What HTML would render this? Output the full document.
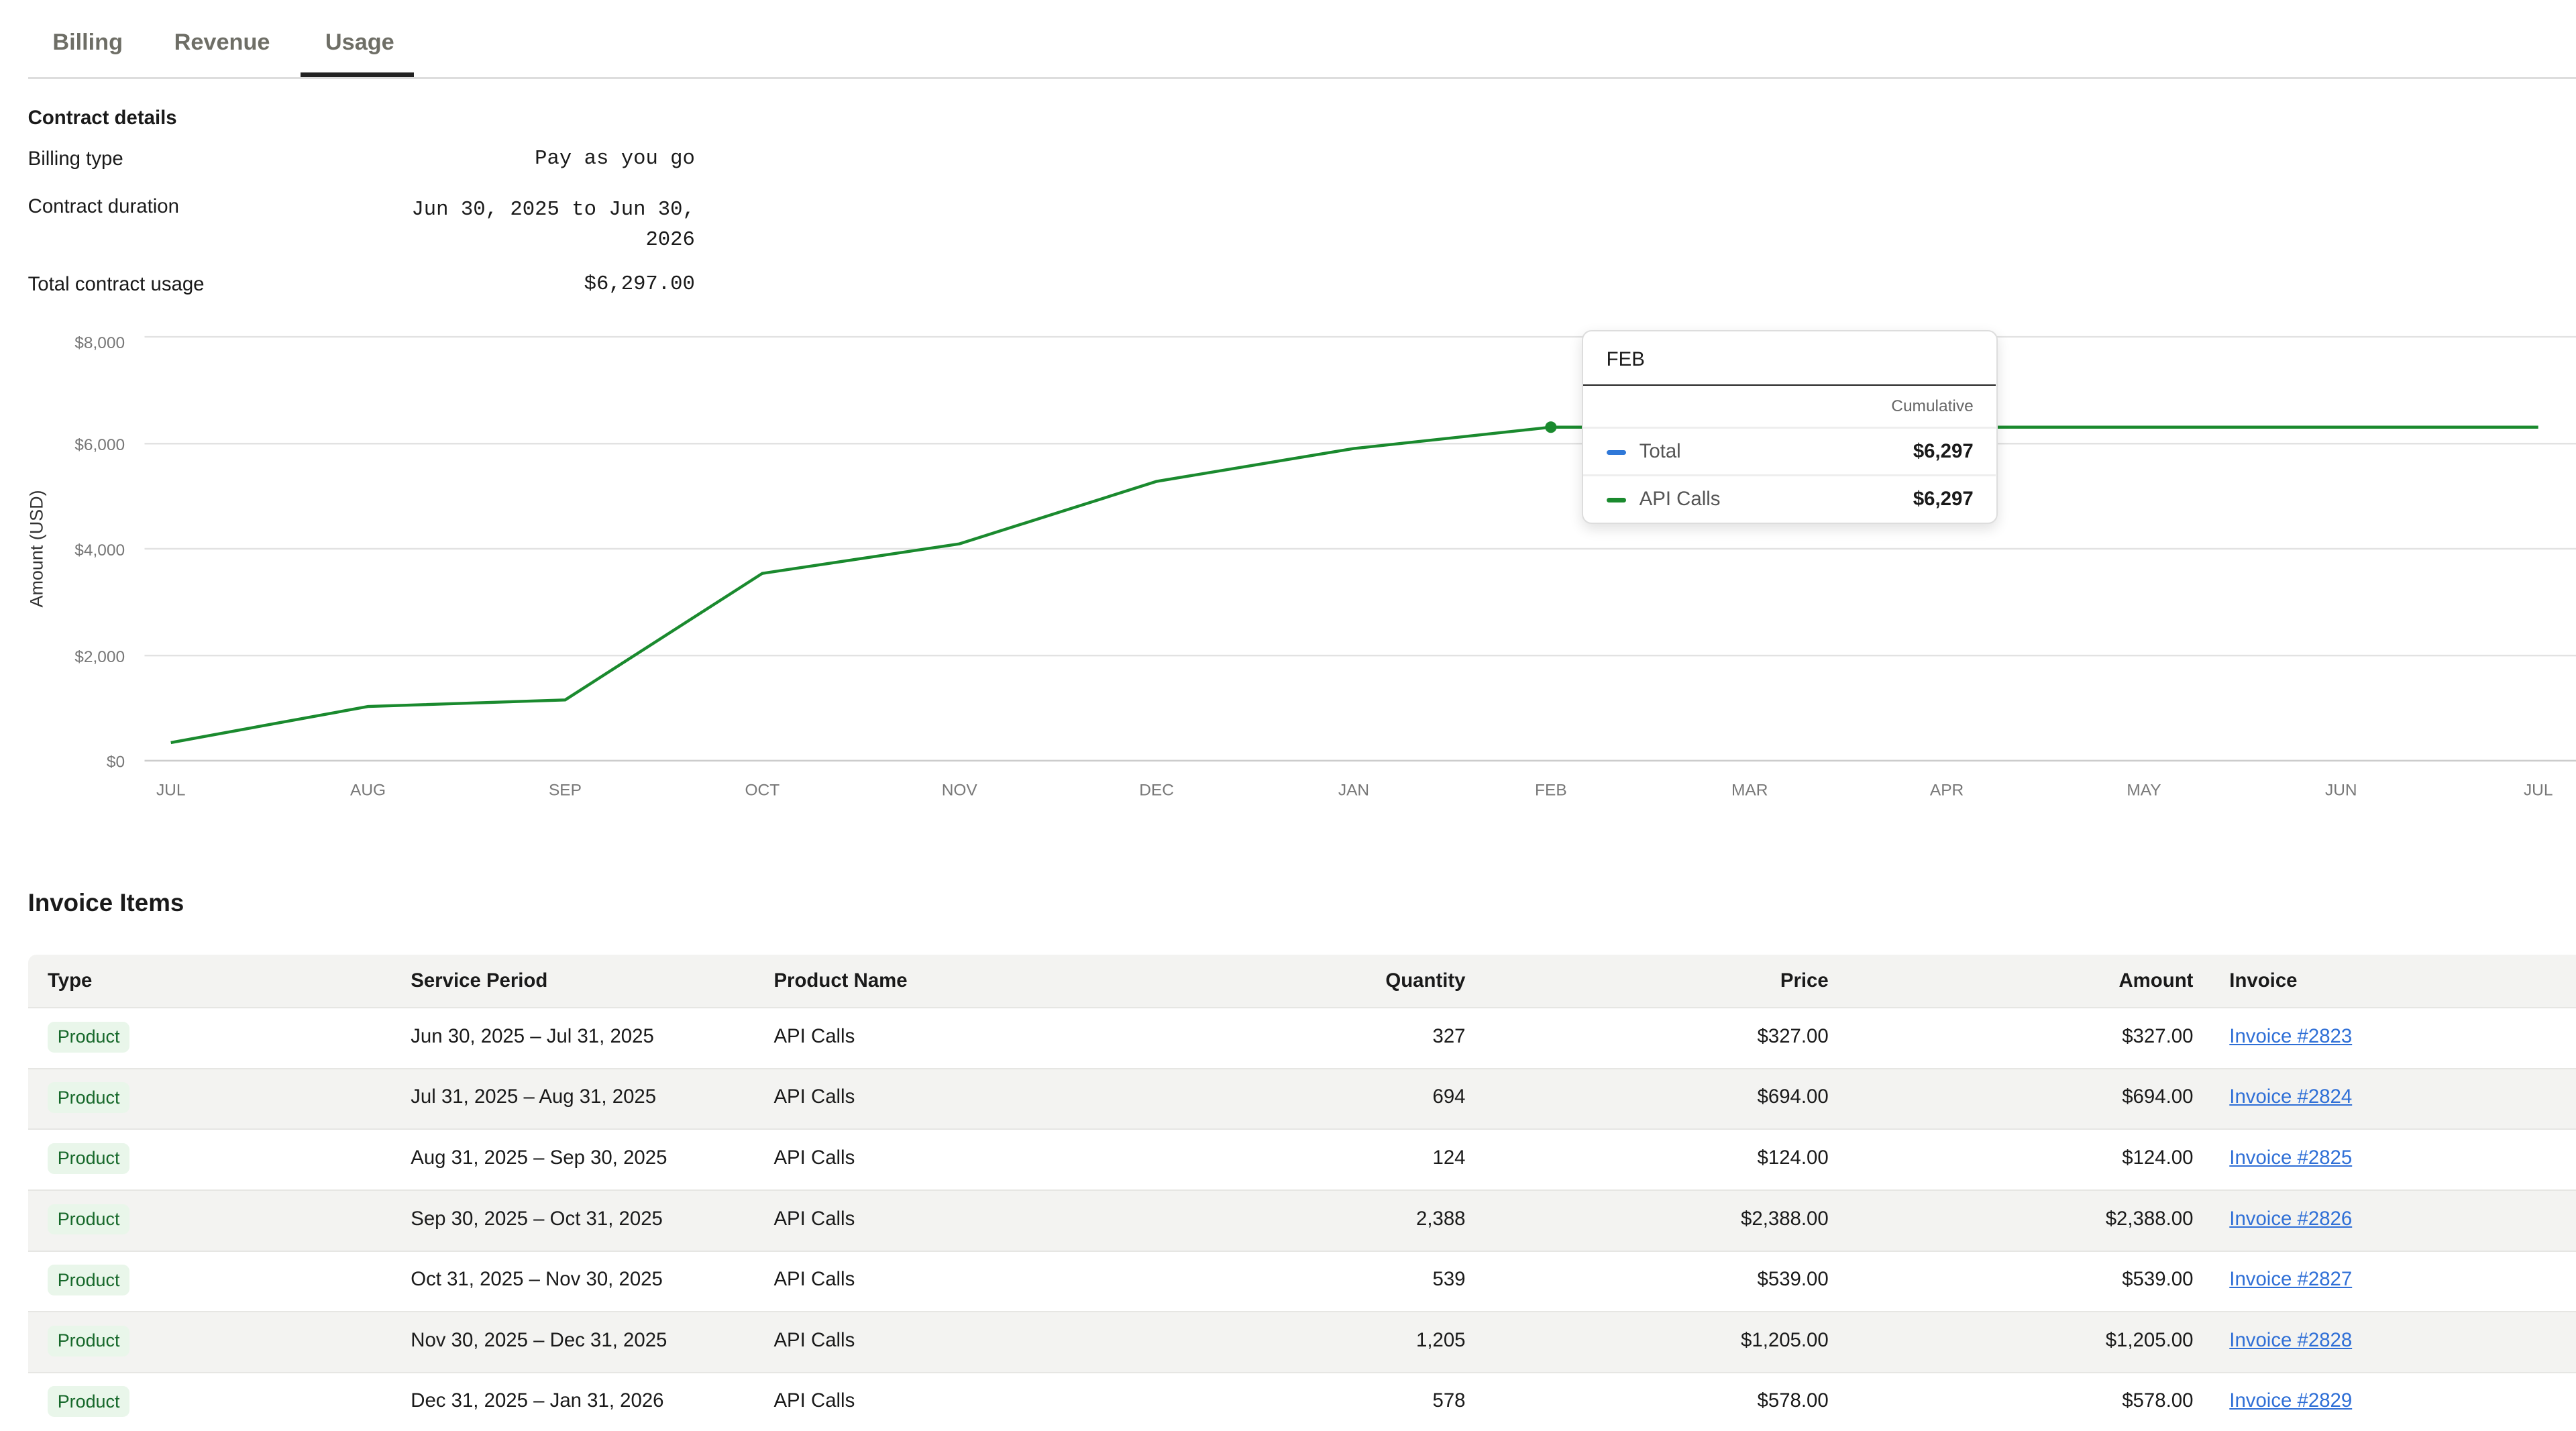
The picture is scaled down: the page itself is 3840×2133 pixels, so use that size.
<!DOCTYPE html>
<html><head><style>
*{margin:0;padding:0;box-sizing:border-box}
html,body{width:3840px;height:2133px;overflow:hidden;background:#fff}
#r{zoom:2.449;width:1568px;height:871px;position:relative;font-family:"Liberation Sans",sans-serif;color:#1a1a1a}
.a{position:absolute;white-space:nowrap}
.tab{font-size:14px;color:#6e6e66;font-weight:bold;top:18px}
.lbl{font-size:12px;left:17px}
.val{font-family:"Liberation Mono",monospace;font-size:12.5px;text-align:right}
.th{font-size:12px;font-weight:bold;top:590px}
.row{position:absolute;left:17px;width:1551px;height:37px;border-top:1px solid #e6e6e3}
.g{background:#f3f3f1}
.row .c{position:absolute;top:10px;font-size:12px;white-space:nowrap}
.pill{position:absolute;left:12px;top:8px;background:#e9f6ea;color:#16682a;font-size:11px;padding:3px 6px;border-radius:4px}
.lnk{color:#2f6fd6;text-decoration:underline}
.c1{left:233px}.c2{left:454px}.c3{right:676px}.c4{right:455px}.c5{right:233px}.c6{left:1340px}
</style></head><body><div id="r">
<div class="a tab" style="left:32px">Billing</div>
<div class="a tab" style="left:106px">Revenue</div>
<div class="a tab" style="left:198px">Usage</div>
<div class="a" style="left:17px;top:47px;width:1551px;height:1px;background:#ddd"></div>
<div class="a" style="left:183px;top:44px;width:69px;height:3px;background:#222"></div>
<div class="a" style="left:17px;top:65px;font-size:12px;font-weight:bold">Contract details</div>
<div class="a lbl" style="top:90px">Billing type</div>
<div class="a val" style="top:90px;left:0;width:423px">Pay as you go</div>
<div class="a lbl" style="top:119px">Contract duration</div>
<div class="a val" style="top:119px;left:0;width:423px;line-height:18px">Jun 30, 2025 to Jun 30,<br>2026</div>
<div class="a lbl" style="top:166px">Total contract usage</div>
<div class="a val" style="top:166px;left:0;width:423px">$6,297.00</div>
<svg class="a" style="left:0;top:0" width="1568" height="520">
<g stroke="#e2e2e2" stroke-width="1">
<line x1="88" x2="1568" y1="205" y2="205"/><line x1="88" x2="1568" y1="270" y2="270"/><line x1="88" x2="1568" y1="334" y2="334"/><line x1="88" x2="1568" y1="399" y2="399"/><line x1="88" x2="1568" y1="463" y2="463" stroke="#ccc"/></g>
<g font-family="Liberation Sans" font-size="10" fill="#777" text-anchor="end">
<text x="76" y="212">$8,000</text><text x="76" y="274">$6,000</text><text x="76" y="338">$4,000</text><text x="76" y="403">$2,000</text><text x="76" y="467">$0</text></g>
<g font-family="Liberation Sans" font-size="10" fill="#777" text-anchor="middle">
<text x="104" y="484">JUL</text><text x="224" y="484">AUG</text><text x="344" y="484">SEP</text><text x="464" y="484">OCT</text><text x="584" y="484">NOV</text><text x="704" y="484">DEC</text><text x="824" y="484">JAN</text><text x="944" y="484">FEB</text><text x="1065" y="484">MAR</text><text x="1185" y="484">APR</text><text x="1305" y="484">MAY</text><text x="1425" y="484">JUN</text><text x="1545" y="484">JUL</text></g>
<text transform="translate(26,334) rotate(-90)" font-family="Liberation Sans" font-size="11" fill="#333" text-anchor="middle">Amount (USD)</text>
<polyline fill="none" stroke="#1a8a2e" stroke-width="1.8" points="104,452 224,430 344,426 464,349 584,331 704,293 824,273 944,260 1545,260"/>
<circle cx="944" cy="260" r="3.5" fill="#1a8a2e"/>
</svg>
<div class="a" style="left:963px;top:201px;width:253px;height:118px;background:#fff;border:1px solid #ddd;border-radius:6px;box-shadow:0 3px 8px rgba(0,0,0,.12)">
<div class="a" style="left:14px;top:10px;font-size:12px">FEB</div>
<div class="a" style="left:0;top:32px;width:251px;height:1px;background:#222"></div>
<div class="a" style="right:14px;top:40px;font-size:10px;color:#666">Cumulative</div>
<div class="a" style="left:0;top:58px;width:251px;height:1px;background:#eee"></div>
<div class="a" style="left:14px;top:72px;width:12px;height:3px;border-radius:2px;background:#2f78d8"></div>
<div class="a" style="left:34px;top:66px;font-size:12px;color:#555">Total</div>
<div class="a" style="right:14px;top:66px;font-size:12px;font-weight:bold">$6,297</div>
<div class="a" style="left:0;top:87px;width:251px;height:1px;background:#eee"></div>
<div class="a" style="left:14px;top:101px;width:12px;height:3px;border-radius:2px;background:#1a8a2e"></div>
<div class="a" style="left:34px;top:95px;font-size:12px;color:#555">API Calls</div>
<div class="a" style="right:14px;top:95px;font-size:12px;font-weight:bold">$6,297</div>
</div>
<div class="a" style="left:17px;top:541px;font-size:15px;font-weight:bold">Invoice Items</div>
<div class="a" style="left:17px;top:581px;width:1551px;height:32px;background:#f3f3f1;border-radius:5px 0 0 0"></div>
<div class="a th" style="left:29px">Type</div>
<div class="a th" style="left:250px">Service Period</div>
<div class="a th" style="left:471px">Product Name</div>
<div class="a th" style="right:676px">Quantity</div>
<div class="a th" style="right:455px">Price</div>
<div class="a th" style="right:233px">Amount</div>
<div class="a th" style="left:1357px">Invoice</div>
<div class="row" style="top:613px"><span class="pill">Product</span><span class="c c1">Jun 30, 2025 – Jul 31, 2025</span><span class="c c2">API Calls</span><span class="c c3">327</span><span class="c c4">$327.00</span><span class="c c5">$327.00</span><span class="c c6 lnk">Invoice #2823</span></div>
<div class="row g" style="top:650px"><span class="pill">Product</span><span class="c c1">Jul 31, 2025 – Aug 31, 2025</span><span class="c c2">API Calls</span><span class="c c3">694</span><span class="c c4">$694.00</span><span class="c c5">$694.00</span><span class="c c6 lnk">Invoice #2824</span></div>
<div class="row" style="top:687px"><span class="pill">Product</span><span class="c c1">Aug 31, 2025 – Sep 30, 2025</span><span class="c c2">API Calls</span><span class="c c3">124</span><span class="c c4">$124.00</span><span class="c c5">$124.00</span><span class="c c6 lnk">Invoice #2825</span></div>
<div class="row g" style="top:724px"><span class="pill">Product</span><span class="c c1">Sep 30, 2025 – Oct 31, 2025</span><span class="c c2">API Calls</span><span class="c c3">2,388</span><span class="c c4">$2,388.00</span><span class="c c5">$2,388.00</span><span class="c c6 lnk">Invoice #2826</span></div>
<div class="row" style="top:761px"><span class="pill">Product</span><span class="c c1">Oct 31, 2025 – Nov 30, 2025</span><span class="c c2">API Calls</span><span class="c c3">539</span><span class="c c4">$539.00</span><span class="c c5">$539.00</span><span class="c c6 lnk">Invoice #2827</span></div>
<div class="row g" style="top:798px"><span class="pill">Product</span><span class="c c1">Nov 30, 2025 – Dec 31, 2025</span><span class="c c2">API Calls</span><span class="c c3">1,205</span><span class="c c4">$1,205.00</span><span class="c c5">$1,205.00</span><span class="c c6 lnk">Invoice #2828</span></div>
<div class="row" style="top:835px"><span class="pill">Product</span><span class="c c1">Dec 31, 2025 – Jan 31, 2026</span><span class="c c2">API Calls</span><span class="c c3">578</span><span class="c c4">$578.00</span><span class="c c5">$578.00</span><span class="c c6 lnk">Invoice #2829</span></div>
</div></body></html>
